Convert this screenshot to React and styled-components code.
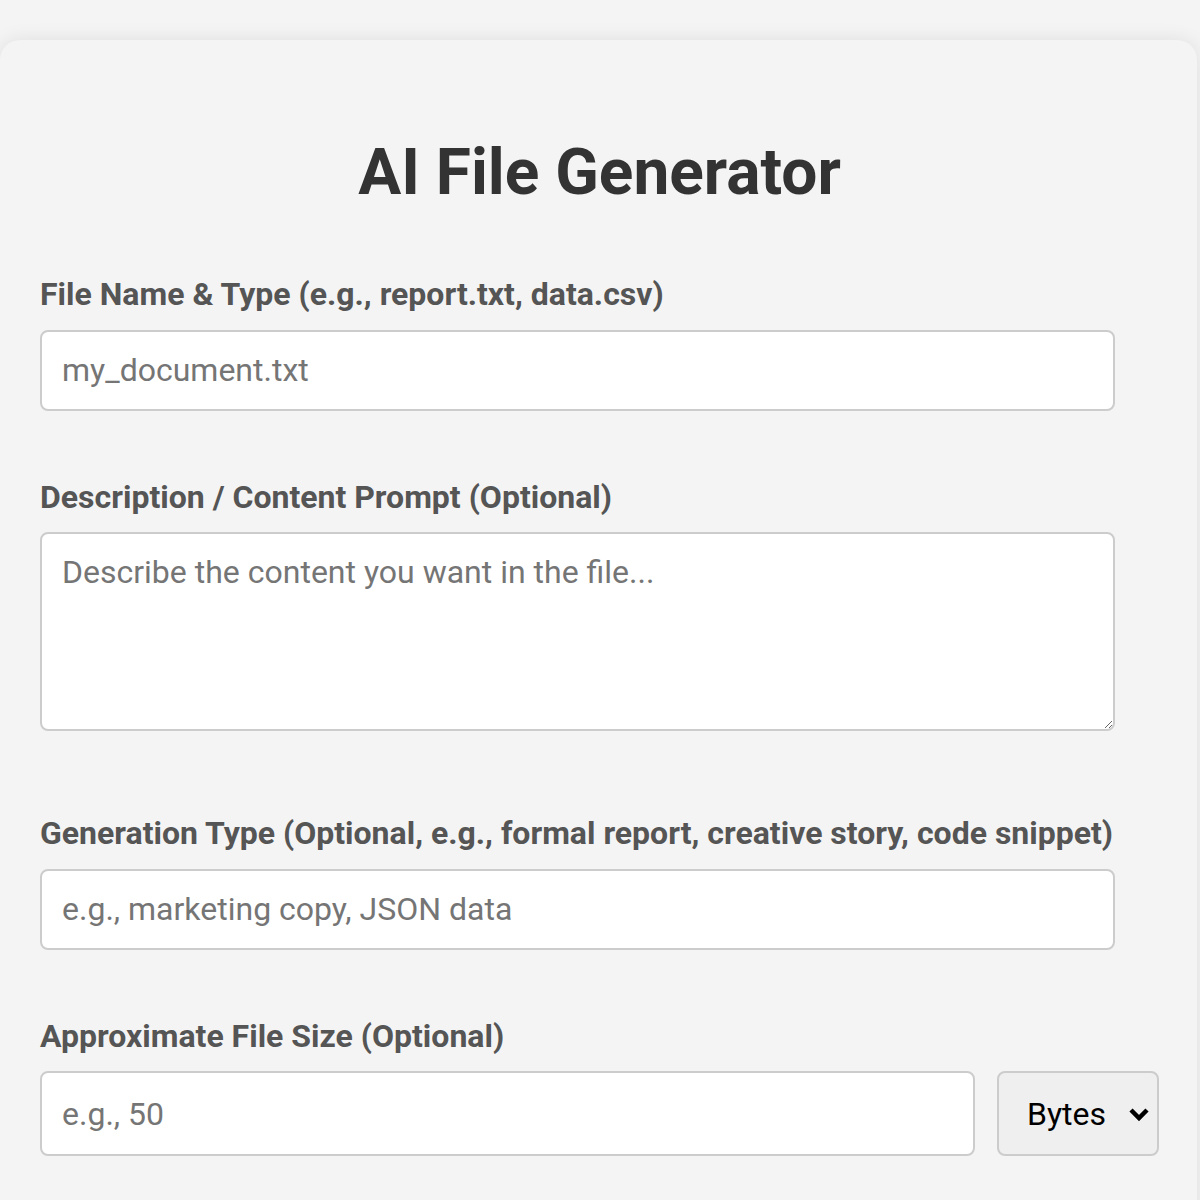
import styled, { createGlobalStyle } from "styled-components";

const GlobalStyle = createGlobalStyle`
  html, body {
    margin: 0;
    padding: 0;
    background: #f4f4f4;
    font-family: Roboto, "Liberation Sans", Arial, sans-serif;
  }
`;

const Card = styled.main`
  margin: 40px 3px 0 0;
  padding: 95px 38px 40px 40px;
  background: #f4f4f4;
  border-radius: 20px;
  box-shadow: 0 0 20px rgba(0, 0, 0, 0.09);
  min-height: 1400px;
  box-sizing: border-box;
`;

const Title = styled.h1`
  margin: 0 0 66px;
  text-align: center;
  font-size: 64px;
  line-height: 75px;
  font-weight: 700;
  color: #333;
`;

const Group = styled.div`
  display: flex;
  flex-direction: column;
  margin-bottom: ${(p) => (p.$extra ? 84 : 68)}px;
`;

const Label = styled.label`
  display: block;
  margin-bottom: 16px;
  font-size: 32px;
  line-height: 37.5px;
  font-weight: 700;
  color: #555;
`;

const fieldBase = `
  box-sizing: border-box;
  border: 2px solid #ccc;
  border-radius: 8px;
  padding: 20px;
  font-family: Roboto, "Liberation Sans", Arial, sans-serif;
  font-size: 32px;
  line-height: 36px;
  color: #333;
  background: #fff;
  outline: none;
  &::placeholder {
    color: #757575;
  }
`;

const TextInput = styled.input`
  ${fieldBase}
  width: calc(100% - 44px);
  height: 81px;
`;

const TextArea = styled.textarea`
  ${fieldBase}
  width: calc(100% - 44px);
  height: 199px;
  resize: vertical;
`;

const SizeRow = styled.div`
  display: flex;
  gap: 22px;
  align-items: stretch;
`;

const SizeInput = styled.input`
  ${fieldBase}
  flex: 1;
  min-width: 0;
  height: 85px;
`;

const UnitSelect = styled.select`
  box-sizing: border-box;
  width: 162px;
  height: 85px;
  padding: 0 40px 0 28px;
  border: 2px solid #ccc;
  border-radius: 8px;
  background-color: #efefef;
  background-image: url("data:image/svg+xml;utf8,<svg xmlns='http://www.w3.org/2000/svg' width='22' height='16' viewBox='0 0 22 16'><path d='M3 4l8 8 8-8' fill='none' stroke='black' stroke-width='4.5'/></svg>");
  background-repeat: no-repeat;
  background-position: right 7px center;
  background-size: 22px 16px;
  appearance: none;
  font-family: Roboto, "Liberation Sans", Arial, sans-serif;
  font-size: 32px;
  color: #000;
  outline: none;
`;

export default function App() {
  return (
    <>
      <GlobalStyle />
      <Card>
        <Title>AI File Generator</Title>

        <Group>
          <Label htmlFor="fileName">File Name &amp; Type (e.g., report.txt, data.csv)</Label>
          <TextInput id="fileName" placeholder="my_document.txt" />
        </Group>

        <Group $extra>
          <Label htmlFor="prompt">Description / Content Prompt (Optional)</Label>
          <TextArea id="prompt" placeholder="Describe the content you want in the file..." />
        </Group>

        <Group>
          <Label htmlFor="genType">
            Generation Type (Optional, e.g., formal report, creative story, code snippet)
          </Label>
          <TextInput id="genType" placeholder="e.g., marketing copy, JSON data" />
        </Group>

        <Group>
          <Label htmlFor="size">Approximate File Size (Optional)</Label>
          <SizeRow>
            <SizeInput id="size" placeholder="e.g., 50" />
            <UnitSelect defaultValue="bytes">
              <option value="bytes">Bytes</option>
              <option value="kb">KB</option>
              <option value="mb">MB</option>
            </UnitSelect>
          </SizeRow>
        </Group>
      </Card>
    </>
  );
}
